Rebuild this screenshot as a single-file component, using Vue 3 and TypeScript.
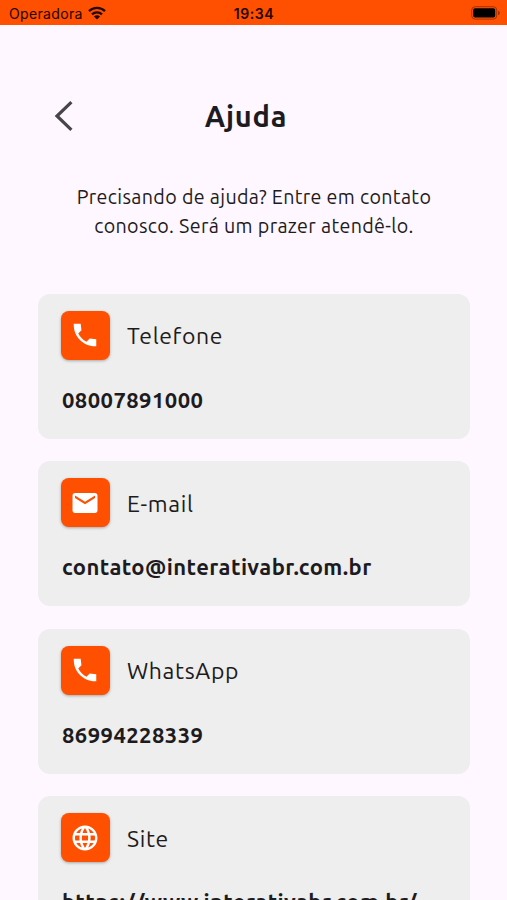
<script setup lang="ts">
type IconName = 'phone' | 'mail' | 'globe'

interface Contact {
  id: string
  icon: IconName
  label: string
  value: string
}

const icons: Record<IconName, string> = {
  phone:
    'M21 15.46l-5.27-.61-2.52 2.52c-2.83-1.44-5.15-3.75-6.59-6.59l2.53-2.53L8.54 3H3.03C2.45 13.18 10.82 21.55 21 20.97v-5.51z',
  mail:
    'M20 4H4c-1.1 0-1.99.9-1.99 2L2 18c0 1.1.9 2 2 2h16c1.1 0 2-.9 2-2V6c0-1.1-.9-2-2-2zm0 4l-8 5-8-5V6l8 5 8-5v2z',
  globe:
    'M11.99 2C6.47 2 2 6.48 2 12s4.47 10 9.99 10C17.52 22 22 17.52 22 12S17.52 2 11.99 2zm6.93 6h-2.95c-.32-1.25-.78-2.45-1.38-3.56 1.84.63 3.37 1.91 4.33 3.56zM12 4.04c.83 1.2 1.48 2.53 1.91 3.96h-3.82c.43-1.43 1.08-2.76 1.91-3.96zM4.26 14C4.1 13.36 4 12.69 4 12s.1-1.36.26-2h3.38c-.08.66-.14 1.32-.14 2s.06 1.34.14 2H4.26zm.82 2h2.95c.32 1.25.78 2.45 1.38 3.56-1.84-.63-3.37-1.9-4.33-3.56zm2.95-8H5.08c.96-1.66 2.49-2.93 4.33-3.56C8.81 5.55 8.35 6.75 8.03 8zM12 19.96c-.83-1.2-1.48-2.53-1.91-3.96h3.82c-.43 1.43-1.08 2.76-1.91 3.96zM14.34 14H9.66c-.09-.66-.16-1.32-.16-2s.07-1.35.16-2h4.68c.09.65.16 1.32.16 2s-.07 1.34-.16 2zm.25 5.56c.6-1.11 1.06-2.31 1.38-3.56h2.95c-.96 1.65-2.49 2.93-4.33 3.56zM16.36 14c.08-.66.14-1.32.14-2s-.06-1.34-.14-2h3.38c.16.64.26 1.31.26 2s-.1 1.36-.26 2h-3.38z',
}

const contacts: Contact[] = [
  { id: 'telefone', icon: 'phone', label: 'Telefone', value: '08007891000' },
  { id: 'email', icon: 'mail', label: 'E-mail', value: 'contato@interativabr.com.br' },
  { id: 'whatsapp', icon: 'phone', label: 'WhatsApp', value: '86994228339' },
  { id: 'site', icon: 'globe', label: 'Site', value: 'https://www.interativabr.com.br/' },
]
</script>

<template>
  <div class="screen">
    <div class="status">
      <div class="carrier">
        <span>Operadora</span>
        <svg class="wifi" viewBox="0 0 18 14" fill="none" stroke="#210700" stroke-width="2.3">
          <path d="M1 5.2a11.5 11.5 0 0 1 16 0" />
          <path d="M4 8.4a7.2 7.2 0 0 1 10 0" />
          <path d="M9 13.6 5.9 10.5a4.4 4.4 0 0 1 6.2 0z" fill="#210700" stroke="none" />
        </svg>
      </div>
      <span class="time">19:34</span>
      <svg class="battery" viewBox="0 0 30 14">
        <rect x=".7" y=".7" width="25" height="12.4" rx="3.4" fill="none" stroke="#a53100" />
        <rect x="2.2" y="2.3" width="22" height="9.2" rx="1.8" fill="#000" />
        <path d="M27 4.8v4.4q2-.7 2-2.2t-2-2.2z" fill="#a53100" />
      </svg>
    </div>

    <header class="header">
      <button class="back" aria-label="Voltar">
        <svg viewBox="0 0 19 30" fill="none" stroke="#47444a" stroke-width="3.2">
          <path d="M17.4 1.2 3 15l14.4 13.8" />
        </svg>
      </button>
      <h1>Ajuda</h1>
    </header>

    <p class="intro">
      Precisando de ajuda? Entre em contato<br />
      conosco. Será um prazer atendê-lo.
    </p>

    <main class="cards">
      <section v-for="c in contacts" :key="c.id" class="card">
        <div class="row">
          <span class="tile">
            <svg viewBox="0 0 24 24" fill="#fff"><path :d="icons[c.icon]" /></svg>
          </span>
          <span class="label">{{ c.label }}</span>
        </div>
        <div class="value">{{ c.value }}</div>
      </section>
    </main>
  </div>
</template>

<style>
body {
  background: #fef7ff;
  overflow: hidden;
}
</style>

<style scoped>
.screen {
  box-sizing: border-box;
  height: 900px;
  overflow: hidden;
  background: #fef7ff;
  color: #1d1b20;
  font-family: Ubuntu, 'Noto Sans', sans-serif;
}
.status {
  display: grid;
  grid-template-columns: 1fr auto 1fr;
  align-items: center;
  height: 25px;
  box-sizing: border-box;
  padding: 2px 6px 0 9px;
  background: #ff4f00;
  color: #210700;
  font-family: Inter, sans-serif;
  font-size: 14px;
  line-height: 22px;
}
.carrier {
  display: flex;
  align-items: center;
  gap: 5px;
  letter-spacing: 0.35px;
}
.wifi {
  width: 18px;
  height: 14px;
  margin-bottom: 2px;
}
.time {
  font-weight: 600;
  letter-spacing: 0.6px;
  margin-right: 2px;
}
.battery {
  width: 30px;
  height: 14px;
  margin-bottom: 2px;
  justify-self: end;
}
.header {
  display: grid;
  grid-template-columns: 70px 1fr 70px;
  align-items: center;
  height: 60px;
  margin-top: 61px;
  padding: 0 38px;
}
.back {
  display: flex;
  border: 0;
  padding: 0 0 0 16px;
  background: none;
}
.back svg {
  width: 19px;
  height: 30px;
}
h1 {
  margin: 0 0 1px;
  text-align: center;
  font-size: 29px;
  line-height: 40px;
  font-weight: 700;
  letter-spacing: 0.75px;
  padding-right: 15px;
}
.intro {
  margin: 37px 0 0;
  padding-left: 1px;
  text-align: center;
  font-size: 19.7px;
  line-height: 29.3px;
  letter-spacing: 0.338px;
  white-space: nowrap;
}
.cards {
  display: flex;
  flex-direction: column;
  gap: 22.5px;
  margin: 52.4px 37px 0 38px;
}
.card {
  box-sizing: border-box;
  flex: none;
  height: 145px;
  padding: 17px 23px 0;
  border-radius: 12px;
  background: #eee;
}
.row {
  display: flex;
  align-items: center;
  gap: 17px;
}
.tile {
  display: flex;
  align-items: center;
  justify-content: center;
  width: 49px;
  height: 49px;
  border-radius: 8px;
  background: #ff4f00;
  box-shadow: 0 1px 3px rgb(0 0 0 / 30%);
}
.tile svg {
  width: 30px;
  height: 30px;
  margin-right: 1px;
}
.label {
  padding-top: 2px;
  font-size: 22.98px;
  line-height: 30px;
  letter-spacing: 0.64px;
}
.value {
  margin: 25px 0 0 1px;
  font-size: 22px;
  line-height: 30px;
  font-weight: 700;
  letter-spacing: 0.44px;
}
</style>
